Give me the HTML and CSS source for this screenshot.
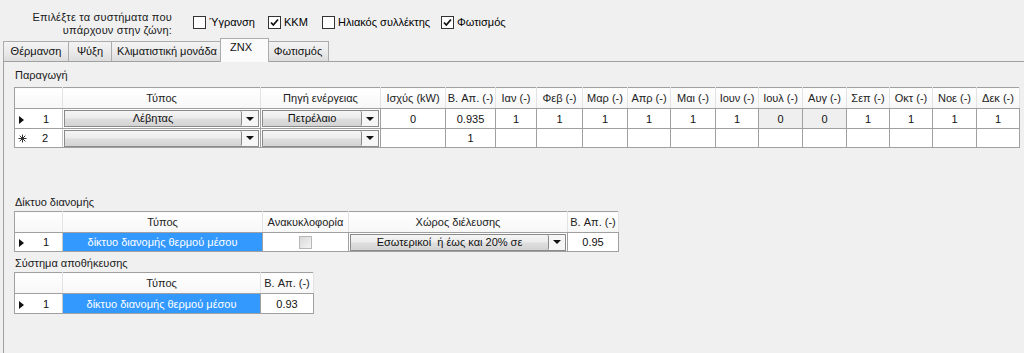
FILE: index.html
```html
<!DOCTYPE html>
<html>
<head>
<meta charset="utf-8">
<link rel="stylesheet" href="styles.css">
</head>
<body>
<div class="top">
  <div class="prompt">Επιλέξτε τα συστήματα που<br>υπάρχουν στην ζώνη:</div>
  <div class="checks">
    <label class="chk w1"><span class="box"></span><span>Ύγρανση</span></label>
    <label class="chk w2"><span class="box"><svg width="11" height="11" viewBox="0 0 11 11"><path d="M2 5.5 L4.3 8 L9 2.5" fill="none" stroke="#111" stroke-width="1.8"/></svg></span><span>ΚΚΜ</span></label>
    <label class="chk w3"><span class="box"></span><span>Ηλιακός συλλέκτης</span></label>
    <label class="chk w4"><span class="box"><svg width="11" height="11" viewBox="0 0 11 11"><path d="M2 5.5 L4.3 8 L9 2.5" fill="none" stroke="#111" stroke-width="1.8"/></svg></span><span>Φωτισμός</span></label>
  </div>
</div>
<div class="tabs">
  <div class="tab t1">Θέρμανση</div>
  <div class="tab t2">Ψύξη</div>
  <div class="tab t3">Κλιματιστική μονάδα</div>
  <div class="tab sel">ΖΝΧ</div>
  <div class="tab t5">Φωτισμός</div>
</div>
<div class="panel">
  <div class="caption c1">Παραγωγή</div>
  <table class="grid g1">
    <colgroup>
      <col style="width:48px"><col style="width:198px"><col style="width:120px"><col style="width:65px"><col style="width:50px">
      <col style="width:41px"><col style="width:46px"><col style="width:45px"><col style="width:43px"><col style="width:45px">
      <col style="width:43px"><col style="width:44px"><col style="width:44px"><col style="width:43px"><col style="width:43px">
      <col style="width:44px"><col style="width:43px">
    </colgroup>
    <tr class="hdr">
      <th></th><th>Τύπος</th><th>Πηγή ενέργειας</th><th>Ισχύς (kW)</th><th>B. Απ. (-)</th>
      <th>Ιαν (-)</th><th>Φεβ (-)</th><th>Μαρ (-)</th><th>Απρ (-)</th><th>Μαι (-)</th>
      <th>Ιουν (-)</th><th>Ιουλ (-)</th><th>Αυγ (-)</th><th>Σεπ (-)</th><th>Οκτ (-)</th>
      <th>Νοε (-)</th><th>Δεκ (-)</th>
    </tr>
    <tr class="r1">
      <td class="rh"><span class="cur"></span><span class="num">1</span></td>
      <td class="cb"><div class="combo"><div class="val">Λέβητας</div><div class="arr"><span class="tri"></span></div></div></td>
      <td class="cb"><div class="combo"><div class="val">Πετρέλαιο</div><div class="arr"><span class="tri"></span></div></div></td>
      <td>0</td><td>0.935</td><td>1</td><td>1</td><td>1</td><td>1</td><td>1</td><td>1</td>
      <td class="dis">0</td><td class="dis">0</td><td>1</td><td>1</td><td>1</td><td>1</td>
    </tr>
    <tr class="r2">
      <td class="rh"><span class="star"><svg width="9" height="9" viewBox="0 0 9 9"><path d="M4.5 0.5V8.5M0.5 4.5H8.5M1.7 1.7L7.3 7.3M7.3 1.7L1.7 7.3" stroke="#333" stroke-width="1"/></svg></span><span class="num">2</span></td>
      <td class="cb"><div class="combo"><div class="val"></div><div class="arr"><span class="tri"></span></div></div></td>
      <td class="cb"><div class="combo"><div class="val"></div><div class="arr"><span class="tri"></span></div></div></td>
      <td></td><td>1</td><td></td><td></td><td></td><td></td><td></td><td></td>
      <td></td><td></td><td></td><td></td><td></td><td></td>
    </tr>
  </table>

  <div class="caption c2">Δίκτυο διανομής</div>
  <table class="grid g2">
    <colgroup>
      <col style="width:48px"><col style="width:200px"><col style="width:86px"><col style="width:219px"><col style="width:51px">
    </colgroup>
    <tr class="hdr">
      <th></th><th>Τύπος</th><th>Ανακυκλοφορία</th><th>Χώρος διέλευσης</th><th>B. Απ. (-)</th>
    </tr>
    <tr class="r1">
      <td class="rh"><span class="cur"></span><span class="num">1</span></td>
      <td class="selc">δίκτυο διανομής θερμού μέσου</td>
      <td><span class="gbox"></span></td>
      <td class="cb"><div class="combo"><div class="val">Εσωτερικοί&nbsp; ή έως και 20% σε</div><div class="arr"><span class="tri"></span></div></div></td>
      <td>0.95</td>
    </tr>
  </table>

  <div class="caption c3">Σύστημα αποθήκευσης</div>
  <table class="grid g3">
    <colgroup>
      <col style="width:48px"><col style="width:198px"><col style="width:53px">
    </colgroup>
    <tr class="hdr">
      <th></th><th>Τύπος</th><th>B. Απ. (-)</th>
    </tr>
    <tr class="r1">
      <td class="rh"><span class="cur"></span><span class="num">1</span></td>
      <td class="selc">δίκτυο διανομής θερμού μέσου</td>
      <td>0.93</td>
    </tr>
  </table>
</div>
</body>
</html>
```

FILE: styles.css
```css
* { box-sizing: border-box; }
html, body { margin: 0; padding: 0; }
body {
  background: #f0f0f0;
  font-family: "Liberation Sans", Arial, sans-serif;
  font-size: 11px;
  color: #000;
  width: 1024px;
  height: 353px;
  overflow: hidden;
}
.top {
  display: flex;
  height: 38px;
}
.prompt {
  width: 172px;
  text-align: right;
  line-height: 13px;
  padding-top: 11px;
  color: #1a1a1a;
  letter-spacing: 0.2px;
}
.checks {
  display: flex;
  margin-left: 21px;
  padding-top: 16px;
  height: 38px;
}
.chk {
  display: flex;
  align-items: flex-start;
  line-height: 13px;
}
.chk .box {
  width: 13px;
  height: 13px;
  border: 1px solid #333;
  background: #fff;
  margin-right: 3px;
  display: flex;
  align-items: center;
  justify-content: center;
}
.w1 { width: 75px; }
.w2 { width: 54px; }
.w3 { width: 119px; }
.w4 { width: 80px; }

.tabs {
  display: flex;
  align-items: flex-end;
  height: 23px;
  padding-left: 3px;
}
.tab {
  height: 20px;
  border: 1px solid #acacac;
  border-bottom: none;
  background: linear-gradient(#f3f3f3, #ebebeb 50%, #dddddd);
  text-align: center;
  line-height: 18px;
  color: #111;
  white-space: nowrap;
}
.t1 { width: 66px; }
.t2 { width: 44px; margin-left: -1px; }
.t3 { width: 112px; margin-left: -1px; }
.sel {
  position: relative;
  z-index: 1;
  width: 49px;
  height: 24px;
  margin-left: -3px;
  margin-bottom: -1px;
  background: #fbfbfb;
  line-height: 16px;
  text-align: left;
  padding-left: 9px;
}
.t5 { width: 62px; margin-left: -2px; }

.panel {
  margin-left: 3px;
  border-top: 1px solid #a0a0a0;
  border-left: 1px solid #a0a0a0;
  height: 292px;
  padding-left: 10px;
}
.caption {
  line-height: 13px;
  color: #1a1a1a;
  padding-left: 1px;
}
.c1 { padding-top: 7px; margin-bottom: 5px; }
.c2 { margin-top: 48px; margin-bottom: 2px; }
.c3 { margin-top: 5px; margin-bottom: 2px; }

.grid {
  border-collapse: collapse;
  table-layout: fixed;
  border: 1px solid #a0a0a0;
  background: #fff;
}
.g1 { width: 1005px; }
.g2 { width: 604px; }
.g3 { width: 299px; }
.grid th, .grid td {
  padding: 0;
  text-align: center;
  white-space: nowrap;
  overflow: hidden;
  font-weight: normal;
  color: #111;
}
.grid th {
  height: 21px;
  background: linear-gradient(#ffffff, #f7f7f7);
  border-right: 1px solid #e3e3e3;
  border-bottom: 1px solid #a0a0a0;
  border-top: 1px solid #a0a0a0;
  color: #222;
}
.grid td {
  height: 19px;
  border: 1px solid #a0a0a0;
}
.g1 .r1 td { height: 20px; }
.g3 .r1 td { height: 20px; }
.grid td.rh {
  text-align: left;
  background: #fff;
  border-right-color: #c8c8c8;
}
.rh .cur {
  display: inline-block;
  width: 0;
  height: 0;
  border-top: 4px solid transparent;
  border-bottom: 4px solid transparent;
  border-left: 5px solid #111;
  margin-left: 4px;
  vertical-align: -1px;
}
.rh .star {
  display: inline-block;
  width: 9px;
  height: 9px;
  margin-left: 3px;
  vertical-align: -1px;
}
.rh .star svg { display: block; }
.rh .num {
  margin-left: 19px;
}
.rh .star + .num { margin-left: 15px; }
.grid td.dis { background: #efefef; }
.grid td.selc {
  background: #3399ff;
  color: #fff;
}
.grid td.cb { padding: 0; }
.combo {
  display: flex;
  height: 17px;
  margin: 0 1px;
  border: 1px solid #8a8a8a;
  background: #f2f2f2;
}
.combo .val {
  flex: 1;
  background: linear-gradient(#f5f5f5, #ececec 45%, #dedede 55%, #d3d3d3);
  border-right: 1px solid #8a8a8a;
  border-radius: 2px;
  line-height: 15px;
  text-align: center;
  color: #111;
  overflow: hidden;
}
.combo .arr {
  width: 16px;
  display: flex;
  align-items: center;
  justify-content: center;
  background: #f6f6f6;
}
.tri {
  width: 0;
  height: 0;
  border-left: 4px solid transparent;
  border-right: 4px solid transparent;
  border-top: 4px solid #111;
}
.gbox {
  display: inline-block;
  width: 13px;
  height: 13px;
  border: 1px solid #b8b8b8;
  background: linear-gradient(135deg, #d9d9d9, #f4f4f4);
  vertical-align: middle;
}
```
